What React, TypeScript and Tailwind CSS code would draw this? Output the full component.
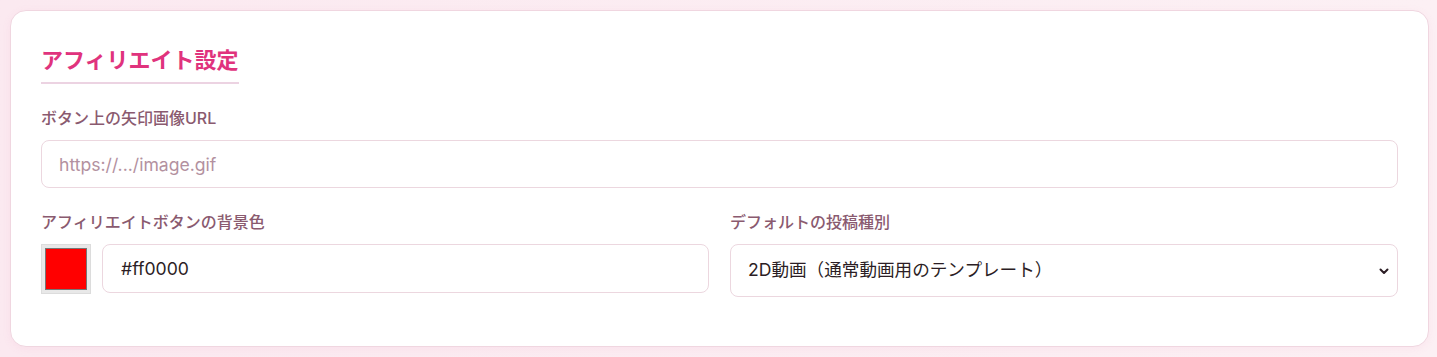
import { useState } from "react";

export default function App() {
  const [url, setUrl] = useState("");
  const [color, setColor] = useState("#ff0000");
  const [kind, setKind] = useState("2d");

  return (
    <div
      className="min-h-[357px] bg-gradient-to-r from-[#fbe9f0] to-[#fcf0f4] pl-[10px] pr-[8px] pt-[10px] pb-[11px]"
      style={{ fontFamily: '"Inter", "Noto Sans CJK JP", sans-serif' }}
    >
      <div className="rounded-[16px] border border-[#f0d6e0] bg-white px-[30px] pt-[35px] pb-[49px] shadow-[0_2px_8px_rgba(224,120,160,0.08)]">
        <h2 className="inline-block border-b-2 border-[#ecd3e2] pb-[8px] text-[22px] leading-[28px] font-bold text-[#e0337d]">
          アフィリエイト設定
        </h2>

        <div className="mt-[22px]">
          <label className="mb-[10px] block text-[16px] leading-[24px] font-medium text-[#8a5a6f]">
            ボタン上の矢印画像URL
          </label>
          <input
            value={url}
            onChange={(e) => setUrl(e.target.value)}
            placeholder="https://.../image.gif"
            className="h-[48px] w-full rounded-[8px] border border-[#ecd7df] px-[17px] text-[17.6px] text-[#2b1d24] outline-none placeholder:text-[#b3919f]"
          />
        </div>

        <div className="mt-[22px] grid grid-cols-2 gap-[21px]">
          <div>
            <label className="mb-[10px] block text-[16px] leading-[24px] font-medium text-[#8a5a6f]">
              アフィリエイトボタンの背景色
            </label>
            <div className="flex items-start gap-[11px]">
              <div className="h-[50px] w-[50px] shrink-0 border border-[#dcdcdc] bg-[#e8e8e8] p-[3px]">
                <div className="h-full w-full border border-[#767676]" style={{ backgroundColor: color }} />
              </div>
              <input
                value={color}
                onChange={(e) => setColor(e.target.value)}
                className="h-[49px] flex-1 rounded-[8px] border border-[#ecd7df] px-[18px] text-[17.6px] text-[#2b1d24] outline-none"
              />
            </div>
          </div>

          <div>
            <label className="mb-[10px] block text-[16px] leading-[24px] font-medium text-[#8a5a6f]">
              デフォルトの投稿種別
            </label>
            <div className="relative">
              <select
                value={kind}
                onChange={(e) => setKind(e.target.value)}
                className="h-[53px] w-full appearance-none rounded-[8px] border border-[#ecd7df] bg-white px-[17px] text-[17.6px] text-[#2b1d24] outline-none [text-spacing-trim:space-all]"
              >
                <option value="2d">2D動画（通常動画用のテンプレート）</option>
              </select>
              <svg
                className="pointer-events-none absolute right-[8px] top-1/2 -translate-y-1/2"
                width="12"
                height="12"
                viewBox="0 0 12 12"
                fill="none"
              >
                <path d="M2.5 4.5 6 8l3.5-3.5" stroke="#2b1d24" strokeWidth="2" strokeLinecap="round" strokeLinejoin="round" />
              </svg>
            </div>
          </div>
        </div>
      </div>
    </div>
  );
}
